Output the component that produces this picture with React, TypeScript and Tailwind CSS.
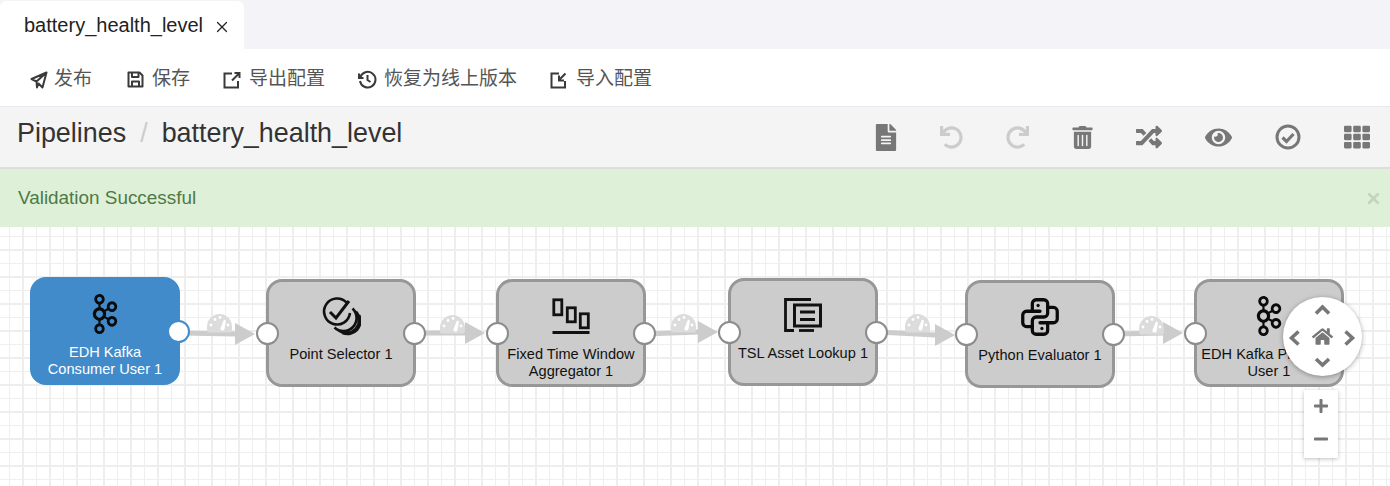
import React from "react";
import { X } from "lucide-react";
import {
  FaEye,
  FaFileAlt,
  FaHome,
  FaMinus,
  FaPlus,
  FaRandom,
  FaRedo,
  FaTh,
  FaTrashAlt,
  FaUndo,
} from "react-icons/fa";
import { SiApachekafka } from "react-icons/si";
import { TbBrandPython } from "react-icons/tb";

function SendIcon() {
  return (
    <svg width="18" height="18" viewBox="0 0 18 18" fill="none" stroke="#3a3a3a" strokeWidth="2" strokeLinejoin="round">
      <path d="M16.5 1.5 1.5 8l5 2.5L16.5 1.5ZM16.5 1.5 12.5 16.5 8.5 12.5 7 16.5 6.5 10.5" />
    </svg>
  );
}

function SaveIcon() {
  return (
    <svg width="17" height="17" viewBox="0 0 17 17" fill="none" stroke="#3a3a3a" strokeWidth="2" strokeLinejoin="round">
      <path d="M1.5 1.5h11l3 3v11h-14z" />
      <path d="M5 1.5v4.5h6.5V1.5M5 15.5v-5h7v5" />
    </svg>
  );
}

function ExportIcon() {
  return (
    <svg width="18" height="18" viewBox="0 0 18 18" fill="none" stroke="#3a3a3a" strokeWidth="2">
      <path d="M9 2.5H1.5v14h13.5V10" />
      <path d="M9 9.5 15.5 3M11.5 2h5v5" />
    </svg>
  );
}

function ImportIcon() {
  return (
    <svg width="18" height="18" viewBox="0 0 18 18" fill="none" stroke="#3a3a3a" strokeWidth="2">
      <path d="M9 2.5H1.5v14h13.5V10" />
      <path d="M15.5 2.5 9.5 8.5M9 4.5v5h5" />
    </svg>
  );
}

function HistoryIcon() {
  return (
    <svg width="19" height="19" viewBox="0 0 19 19" fill="none" stroke="#3a3a3a" strokeWidth="2">
      <path d="M2.2 7.5A7.8 7.8 0 1 1 2 11" />
      <path d="M1 3.5v4.5h4.5" />
      <path d="M9.5 5v5l3 2" />
    </svg>
  );
}

function CheckCircleIcon() {
  return (
    <svg width="26" height="26" viewBox="0 0 26 26" fill="none" stroke="#777" className="shrink-0">
      <circle cx="13" cy="13" r="11" strokeWidth="3" />
      <path d="m7.5 13.5 4 4 7-7.5" strokeWidth="3.2" />
    </svg>
  );
}

function PointIcon() {
  return (
    <svg width="40" height="40" viewBox="0 0 40 40" fill="none" stroke="#111" strokeWidth="2.6">
      <path d="M25.5 6.5A13 13 0 1 0 29 17" />
      <path d="m9 16 6 6L28 5" strokeWidth="3" />
      <path d="M31.5 12.5a13 13 0 0 1-18 19M35 15.5a13 13 0 0 1-17.5 19M38 19a13 13 0 0 1-16.5 18" />
    </svg>
  );
}

function WindowIcon() {
  return (
    <svg width="38" height="36" viewBox="0 0 38 36" fill="none" stroke="#111" strokeWidth="2.8">
      <rect x="1.8" y="1.8" width="8" height="15" />
      <rect x="15.3" y="9.8" width="8" height="14" />
      <rect x="28.3" y="15.8" width="8" height="14" />
      <path d="M0.5 34.5h37" />
    </svg>
  );
}

function LookupIcon() {
  return (
    <svg width="38" height="34" viewBox="0 0 38 34" fill="none" stroke="#111">
      <path d="M27 1.5H1.5v31H10" strokeWidth="2.8" />
      <path d="M15 32.5h15" strokeWidth="2.8" />
      <rect x="10.5" y="7" width="26" height="21" strokeWidth="3" />
      <path d="M16 14h15M16 21.5h15" strokeWidth="2.8" />
    </svg>
  );
}

// speed gauge that sits on an edge
function Gauge({ x, y }: { x: number; y: number }) {
  return (
    <g transform={`translate(${x} ${y})`}>
      <path d="M1 18.5Q0 18 0 13A12.5 13 0 0 1 25 13Q25 18 24 18.5z" fill="#dcdcdc" />
      <g fill="#fff">
        <circle cx="4" cy="11" r="1.4" />
        <circle cx="8" cy="5.5" r="1.4" />
        <circle cx="13" cy="3.5" r="1.4" />
        <circle cx="21" cy="11" r="1.4" />
        <path d="M17 5.5 19 6.5 17.5 15a2 2 0 0 1-4-1z" />
      </g>
    </g>
  );
}

const edges = [
  { x1: 180, y1: 333, x2: 236, y2: 334, tip: 255, tipY: 334, gx: 207, gy: 314 },
  { x1: 415, y1: 333, x2: 466, y2: 333, tip: 485, tipY: 333, gx: 440, gy: 315 },
  { x1: 646, y1: 334, x2: 698, y2: 332, tip: 718, tipY: 332, gx: 671, gy: 314 },
  { x1: 878, y1: 332, x2: 935, y2: 335, tip: 955, tipY: 335, gx: 905, gy: 314 },
  { x1: 1115, y1: 334, x2: 1164, y2: 333, tip: 1183, tipY: 333, gx: 1139, gy: 316 },
];

const nodes = [
  { label: ["EDH Kafka", "Consumer User 1"], pos: "left-[30px] top-[50px]", icon: <SiApachekafka size={40} color="#0b0b0b" />, active: true, ports: "right" },
  { label: ["Point Selector 1"], pos: "left-[266px] top-[52px]", icon: <PointIcon />, ports: "both" },
  { label: ["Fixed Time Window", "Aggregator 1"], pos: "left-[496px] top-[52px]", icon: <WindowIcon />, ports: "both" },
  { label: ["TSL Asset Lookup 1"], pos: "left-[728px] top-[51px]", icon: <LookupIcon />, ports: "both" },
  { label: ["Python Evaluator 1"], pos: "left-[965px] top-[53px]", icon: <TbBrandPython size={46} color="#0b0b0b" strokeWidth={1.7} />, ports: "both" },
  { label: ["EDH Kafka Producer", "User 1"], pos: "left-[1194px] top-[52px]", icon: <SiApachekafka size={40} color="#0b0b0b" />, ports: "left" },
];

function Node({ node }: { node: (typeof nodes)[number] }) {
  const ring = node.active ? "border-[#428bca]" : "border-[#8c8c8c]";
  return (
    <div
      className={`absolute ${node.pos} flex h-[108px] w-[150px] flex-col items-center rounded-[16px] border-[3px] ${
        node.active ? "border-[#428bca] bg-[#428bca] text-white" : "border-[#979797] bg-[#cccccc] text-[#111]"
      }`}
    >
      <div className="flex h-[64px] w-full shrink-0 items-center justify-center pt-[4px]">{node.icon}</div>
      {node.label.map((line) => (
        <div key={line} className="whitespace-nowrap text-center text-[14.6px] leading-[17px]">
          {line}
        </div>
      ))}
      {node.ports !== "right" && (
        <div className={`absolute left-[-13px] top-[40px] h-[23px] w-[23px] rounded-full border-2 bg-white ${ring}`} />
      )}
      {node.ports !== "left" && (
        <div className={`absolute right-[-13px] top-[40px] h-[23px] w-[23px] rounded-full border-2 bg-white ${ring}`} />
      )}
    </div>
  );
}

export default function App() {
  return (
    <div className="flex h-[486px] w-[1390px] flex-col overflow-hidden bg-white font-['Liberation_Sans','Noto_Sans_CJK_SC',sans-serif] text-[#333]">
      {/* tabs */}
      <div className="flex h-[49px] shrink-0 items-end bg-[#f3f3f8]">
        <div className="flex h-[48px] w-[244px] items-center rounded-t-[6px] bg-white pl-[24px] text-[20px] text-[#222]">
          battery_health_level
          <X size={18} strokeWidth={1.6} className="ml-[10px] mt-[3px]" />
        </div>
      </div>

      {/* action bar */}
      <div className="flex h-[57px] shrink-0 items-center gap-[33px] pl-[30px] pt-[4px] text-[19px] text-[#555]">
        <div className="flex w-[64px] items-center gap-[8px]">
          <span className="-mr-[2px]"><SendIcon /></span>
          <span>发布</span>
        </div>
        <div className="flex items-center gap-[8px]">
          <SaveIcon />
          <span>保存</span>
        </div>
        <div className="flex items-center gap-[8px]">
          <ExportIcon />
          <span>导出配置</span>
        </div>
        <div className="flex items-center gap-[7px]">
          <HistoryIcon />
          <span>恢复为线上版本</span>
        </div>
        <div className="flex items-center gap-[8px]">
          <ImportIcon />
          <span>导入配置</span>
        </div>
      </div>

      {/* page header */}
      <div className="flex h-[63px] shrink-0 items-center border-b-2 border-t border-b-[#dddddd] border-t-[#e8e8ee] bg-[#f4f4f4] pl-[17px] pr-[21px]">
        <div className="mb-[8px] flex items-center text-[26.9px] text-[#333]">
          <span>Pipelines</span>
          <span className="mx-[14px] text-[#cccccc]">/</span>
          <span>battery_health_level</span>
        </div>
        <div className="ml-auto flex items-center text-[#777]">
          <div className="flex w-[24px] justify-center"><FaFileAlt size={27} /></div>
          <div className="ml-[41px] flex w-[24px] justify-center text-[#cccccc]"><FaUndo size={23} /></div>
          <div className="ml-[42px] flex w-[24px] justify-center text-[#cccccc]"><FaRedo size={23} /></div>
          <div className="ml-[41px] flex w-[24px] justify-center"><FaTrashAlt size={23} /></div>
          <div className="ml-[43px] flex w-[24px] justify-center"><FaRandom size={26} className="shrink-0" /></div>
          <div className="ml-[45px] flex w-[24px] justify-center"><FaEye size={27} className="shrink-0" /></div>
          <div className="ml-[46px] flex w-[24px] justify-center"><CheckCircleIcon /></div>
          <div className="ml-[45px] flex w-[24px] justify-center"><FaTh size={26} className="shrink-0" /></div>
        </div>
      </div>

      {/* validation message */}
      <div className="flex h-[58px] shrink-0 items-center justify-between bg-[#dff0d8] pl-[18px] pr-[8px] text-[18.9px] text-[#4d7a45]">
        <span>Validation Successful</span>
        <X size={17} strokeWidth={4} className="text-[#c3d6bb]" />
      </div>

      {/* canvas */}
      <div className="relative flex-1 overflow-hidden bg-white [background-image:linear-gradient(#eeeeee_2px,transparent_2px),linear-gradient(90deg,#eeeeee_2px,transparent_2px),linear-gradient(#efefef_1px,transparent_1px),linear-gradient(90deg,#efefef_1px,transparent_1px)] [background-position:0_22px,22px_0,0_9px,9px_0] [background-size:27px_27px]">
        <svg className="absolute left-0 top-[-227px]" width="1390" height="486">
          {edges.map((e) => (
            <g key={e.x1}>
              <path d={`M${e.x1} ${e.y1}L${e.x2} ${e.y2}`} stroke="#cccccc" strokeWidth="5" />
              <path d={`M${e.tip} ${e.tipY}l-20-11v22z`} fill="#cccccc" />
              <Gauge x={e.gx} y={e.gy} />
            </g>
          ))}
        </svg>

        {nodes.map((n) => (
          <Node key={n.pos} node={n} />
        ))}

        {/* pan control */}
        <div className="absolute left-[1283px] top-[70px] h-[79px] w-[79px] rounded-full bg-white text-[#777] shadow-[0_1px_5px_rgba(0,0,0,0.35)]">
          <svg className="absolute left-0 top-0" width="79" height="79" viewBox="0 0 79 79" fill="none" stroke="#777" strokeWidth="3.6">
            <path d="M33 16.5 39.5 10 46 16.5" />
            <path d="M33 62l6.5 6L46 62" />
            <path d="M15.5 34.5 8.5 41l7 6.5" />
            <path d="M62.5 34.5l7 6.5-7 6.5" />
          </svg>
          <FaHome size={21} className="absolute left-[29px] top-[29px]" />
        </div>

        {/* zoom control */}
        <div className="absolute left-[1304px] top-[163px] flex h-[68px] w-[34px] flex-col items-center justify-around bg-white pb-[3px] text-[#777] shadow-[0_1px_4px_rgba(0,0,0,0.25)]">
          <FaPlus size={16} />
          <FaMinus size={16} />
        </div>
      </div>
    </div>
  );
}
